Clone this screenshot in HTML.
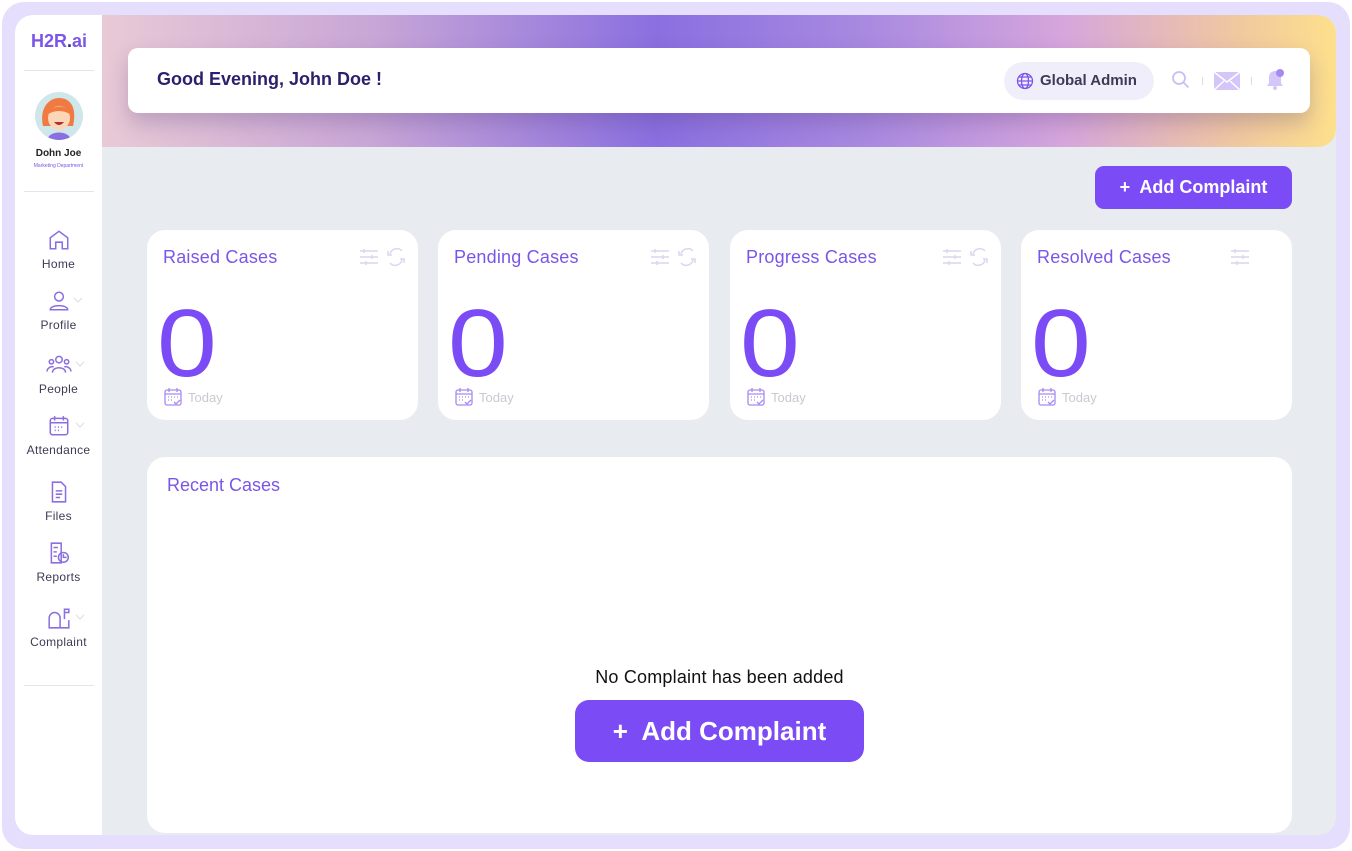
<!DOCTYPE html>
<html><head><meta charset="utf-8"><style>
*{margin:0;padding:0;box-sizing:border-box}
body{width:1352px;height:851px;background:#fff;font-family:"Liberation Sans",sans-serif;position:relative;overflow:hidden}
.frame{position:absolute;left:2px;top:2px;width:1348px;height:847px;background:#e6defd;border-radius:22px}
.inner{position:absolute;left:15px;top:15px;width:1321px;height:820px;background:#e8ebf0;border-radius:18px;overflow:hidden}
.side{position:absolute;left:0;top:0;width:87px;height:820px;background:#fff}
.band{position:absolute;left:87px;top:0;right:0;height:132px;border-top-right-radius:18px;border-bottom-right-radius:18px;
background:linear-gradient(90deg,#e8cad6 0%,#c8a6d6 22%,#8a6fe0 45%,#a98ae0 62%,#d6a6dc 78%,#f0c8a0 92%,#fde08c 100%)}
.hcard{position:absolute;left:113px;top:33px;width:1182px;height:65px;background:#fff;border-radius:10px;box-shadow:0 10px 20px rgba(80,50,120,.25)}
.abs{position:absolute}
.card{position:absolute;top:215px;width:271px;height:190px;background:#fff;border-radius:18px}
.card h3{position:absolute;left:16px;top:17px;font-size:18px;font-weight:normal;color:#7b55e8;letter-spacing:.2px}
.card .n{position:absolute;left:10px;top:66px;font-size:96px;color:#7b4bf5;line-height:1;transform:scaleX(1.12);transform-origin:left}
.card .t{position:absolute;left:41px;top:160px;font-size:13px;color:#c9c9d0}
.card .cal{position:absolute;left:16px;top:157px}
.card .ic{position:absolute;right:10px;top:17px}
.nav{position:absolute;left:0;width:87px;text-align:center;font-size:12px;color:#3b3b55;letter-spacing:.3px}
.nav svg{margin-bottom:2px}
</style></head><body>
<div class="frame"></div>
<div class="inner">
 <div class="band"></div>
 <div class="side">
  <div class="abs" style="left:16px;top:16px;font-size:18px;font-weight:bold;color:#7b55e8">H2R<span style="color:#3a2a7a">.</span>ai</div>
  <div class="abs" style="left:9px;top:55px;width:70px;height:1px;background:#e4e4ee"></div>
  <div class="abs" style="left:20px;top:77px;width:48px;height:48px;border-radius:50%;background:#cfe6ea;overflow:hidden">
   <svg width="48" height="48" viewBox="0 0 48 48"><path d="M8 34 C4 16 14 6 24 6 C36 6 42 16 38 34Z" fill="#f07a42"/><ellipse cx="24" cy="26" rx="11" ry="12" fill="#fbd7b8"/><path d="M13 22 C16 12 32 12 35 22 C28 18 20 18 13 22Z" fill="#f07a42"/><path d="M12 48 C14 38 34 38 36 48Z" fill="#8b6fe0"/><path d="M19 30 Q24 36 29 30Z" fill="#a33"/></svg>
  </div>
  <div class="abs" style="left:0;width:87px;top:133px;text-align:center;font-size:10px;font-weight:bold;color:#222">Dohn Joe</div>
  <div class="abs" style="left:0;width:87px;top:148px;text-align:center;font-size:5px;color:#7b55e8">Marketing Department</div>
  <div class="abs" style="left:9px;top:176px;width:70px;height:1px;background:#e4e4ee"></div>
  <div class="nav" style="top:213px"><svg width="24" height="24" viewBox="0 0 22 22" fill="none" stroke="#8b6fe0" stroke-width="1.4"><path d="M3 19V9l8-6 8 6v10h-5v-6h-6v6z"/></svg><br>Home</div>
  <div class="nav" style="top:274px"><svg width="24" height="24" viewBox="0 0 22 22" fill="none" stroke="#8b6fe0" stroke-width="1.4"><circle cx="11" cy="7" r="4"/><path d="M3 19c0-5 16-5 16 0z"/></svg><svg class="abs" style="left:58px;top:8px" width="10" height="6" viewBox="0 0 10 6" fill="none" stroke="#ddd"><path d="M1 1l4 4 4-4"/></svg><br>Profile</div>
  <div class="nav" style="top:338px"><svg width="26" height="24" viewBox="0 0 24 22" fill="none" stroke="#8b6fe0" stroke-width="1.4"><circle cx="12" cy="6" r="3"/><circle cx="5" cy="8" r="2"/><circle cx="19" cy="8" r="2"/><path d="M6 18c0-6 12-6 12 0M1 17c0-4 5-5 6-4M23 17c0-4-5-5-6-4"/></svg><svg class="abs" style="left:60px;top:8px" width="10" height="6" viewBox="0 0 10 6" fill="none" stroke="#ddd"><path d="M1 1l4 4 4-4"/></svg><br>People</div>
  <div class="nav" style="top:399px"><svg width="24" height="24" viewBox="0 0 22 22" fill="none" stroke="#8b6fe0" stroke-width="1.4"><rect x="3" y="4" width="16" height="15" rx="2"/><path d="M3 8h16M7 2v4M15 2v4M7 12h1M10 12h1M13 12h1M7 15h1M10 15h1"/></svg><svg class="abs" style="left:60px;top:8px" width="10" height="6" viewBox="0 0 10 6" fill="none" stroke="#ddd"><path d="M1 1l4 4 4-4"/></svg><br>Attendance</div>
  <div class="nav" style="top:465px"><svg width="24" height="24" viewBox="0 0 22 22" fill="none" stroke="#8b6fe0" stroke-width="1.4"><path d="M5 2h8l4 4v14H5z M8 10h6M8 13h6M8 16h4"/></svg><br>Files</div>
  <div class="nav" style="top:526px"><svg width="24" height="24" viewBox="0 0 22 22" fill="none" stroke="#8b6fe0" stroke-width="1.4"><path d="M4 2h9v18H4z M6 6h4M6 10h3M6 14h3"/><circle cx="15" cy="15" r="4.5"/><path d="M15 12v3h3"/></svg><br>Reports</div>
  <div class="nav" style="top:591px"><svg width="24" height="24" viewBox="0 0 22 22" fill="none" stroke="#8b6fe0" stroke-width="1.4"><path d="M2 20V11a5 5 0 0 1 10 0v9zM12 20h8v-7M16 12V3h4v3h-4"/></svg><svg class="abs" style="left:60px;top:8px" width="10" height="6" viewBox="0 0 10 6" fill="none" stroke="#ddd"><path d="M1 1l4 4 4-4"/></svg><br>Complaint</div>
  <div class="abs" style="left:9px;top:670px;width:70px;height:1px;background:#e4e4ee"></div>
 </div>
 <div class="hcard">
  <div class="abs" style="left:29px;top:21px;font-size:18px;font-weight:bold;color:#2b1f6e">Good Evening, John Doe !</div>
  <div class="abs" style="left:876px;top:14px;width:150px;height:38px;border-radius:19px;background:#f1eefc"></div>
  <svg class="abs" style="left:888px;top:24px" width="18" height="18" viewBox="0 0 18 18" fill="none" stroke="#7b55e8" stroke-width="1.3"><circle cx="9" cy="9" r="7.5"/><ellipse cx="9" cy="9" rx="3.5" ry="7.5"/><path d="M1.5 9h15M3 5h12M3 13h12"/></svg>
  <div class="abs" style="left:912px;top:24px;font-size:15px;font-weight:bold;color:#3b3b55">Global Admin</div>
  <svg class="abs" style="left:1043px;top:22px" width="20" height="20" viewBox="0 0 20 20" fill="none" stroke="#cbbdf5" stroke-width="1.8"><circle cx="8" cy="8" r="6"/><path d="M12.5 12.5l5 5"/></svg>
  <div class="abs" style="left:1074px;top:29px;width:1px;height:8px;background:#ddd"></div>
  <svg class="abs" style="left:1086px;top:24px" width="26" height="18" viewBox="0 0 26 18"><rect width="26" height="18" fill="#d4c6f8"/><path d="M0 0l13 10L26 0M0 18l10-9M26 18l-10-9" stroke="#fff" stroke-width="1.5" fill="none"/></svg>
  <div class="abs" style="left:1123px;top:29px;width:1px;height:8px;background:#ddd"></div>
  <svg class="abs" style="left:1136px;top:20px" width="22" height="24" viewBox="0 0 22 24"><path d="M3 18h16l-2-3v-6a6 6 0 0 0-12 0v6z" fill="#d4c6f8"/><circle cx="11" cy="20" r="2" fill="#d4c6f8"/><circle cx="16" cy="5" r="4" fill="#a68af2"/></svg>
 </div>
 <div class="abs" style="left:1080px;top:151px;width:197px;height:43px;background:#7b4bf5;border-radius:9px;color:#fff;font-size:18px;font-weight:bold;text-align:center;line-height:43px">+&nbsp; Add Complaint</div>

 <div class="card" style="left:132px"><h3>Raised Cases</h3>
  <svg class="ic" width="50" height="20" viewBox="0 0 50 20" fill="none" stroke="#dcd6f0" stroke-width="1.5"><path d="M2 4h18M2 10h18M2 16h18M6 2v4M14 8v4M8 14v4"/><path d="M44 4a7 7 0 0 0-12 3M32 16a7 7 0 0 0 12-3M30 4v4h4M46 16v-4h-4"/></svg>
  <div class="n">0</div>
  <svg class="cal" width="20" height="20" viewBox="0 0 20 20" fill="none" stroke="#a68af2" stroke-width="1.3"><rect x="2" y="3" width="16" height="15" rx="2"/><path d="M2 7h16M6 1v4M14 1v4M5 10h1M8 10h1M11 10h1M14 10h1M5 13h1M8 13h1M11 15l2 2 4-4"/></svg>
  <div class="t">Today</div></div>
 <div class="card" style="left:423px"><h3>Pending Cases</h3>
  <svg class="ic" width="50" height="20" viewBox="0 0 50 20" fill="none" stroke="#dcd6f0" stroke-width="1.5"><path d="M2 4h18M2 10h18M2 16h18M6 2v4M14 8v4M8 14v4"/><path d="M44 4a7 7 0 0 0-12 3M32 16a7 7 0 0 0 12-3M30 4v4h4M46 16v-4h-4"/></svg>
  <div class="n">0</div>
  <svg class="cal" width="20" height="20" viewBox="0 0 20 20" fill="none" stroke="#a68af2" stroke-width="1.3"><rect x="2" y="3" width="16" height="15" rx="2"/><path d="M2 7h16M6 1v4M14 1v4M5 10h1M8 10h1M11 10h1M14 10h1M5 13h1M8 13h1M11 15l2 2 4-4"/></svg>
  <div class="t">Today</div></div>
 <div class="card" style="left:715px"><h3>Progress Cases</h3>
  <svg class="ic" width="50" height="20" viewBox="0 0 50 20" fill="none" stroke="#dcd6f0" stroke-width="1.5"><path d="M2 4h18M2 10h18M2 16h18M6 2v4M14 8v4M8 14v4"/><path d="M44 4a7 7 0 0 0-12 3M32 16a7 7 0 0 0 12-3M30 4v4h4M46 16v-4h-4"/></svg>
  <div class="n">0</div>
  <svg class="cal" width="20" height="20" viewBox="0 0 20 20" fill="none" stroke="#a68af2" stroke-width="1.3"><rect x="2" y="3" width="16" height="15" rx="2"/><path d="M2 7h16M6 1v4M14 1v4M5 10h1M8 10h1M11 10h1M14 10h1M5 13h1M8 13h1M11 15l2 2 4-4"/></svg>
  <div class="t">Today</div></div>
 <div class="card" style="left:1006px"><h3>Resolved Cases</h3>
  <svg class="ic" style="right:42px" width="20" height="20" viewBox="0 0 20 20" fill="none" stroke="#dcd6f0" stroke-width="1.5"><path d="M1 4h18M1 10h18M1 16h18M5 2v4M13 8v4M7 14v4"/></svg>
  <div class="n">0</div>
  <svg class="cal" width="20" height="20" viewBox="0 0 20 20" fill="none" stroke="#a68af2" stroke-width="1.3"><rect x="2" y="3" width="16" height="15" rx="2"/><path d="M2 7h16M6 1v4M14 1v4M5 10h1M8 10h1M11 10h1M14 10h1M5 13h1M8 13h1M11 15l2 2 4-4"/></svg>
  <div class="t">Today</div></div>

 <div class="abs" style="left:132px;top:442px;width:1145px;height:376px;background:#fff;border-radius:18px">
  <div class="abs" style="left:20px;top:18px;font-size:18px;color:#7b55e8">Recent Cases</div>
  <div class="abs" style="left:0;width:1145px;top:210px;text-align:center;font-size:18px;color:#111;letter-spacing:.2px">No Complaint has been added</div>
  <div class="abs" style="left:428px;top:243px;width:289px;height:62px;background:#7b4bf5;border-radius:14px;color:#fff;font-size:26px;font-weight:bold;text-align:center;line-height:62px">+&nbsp; Add Complaint</div>
 </div>
</div>
</body></html>
